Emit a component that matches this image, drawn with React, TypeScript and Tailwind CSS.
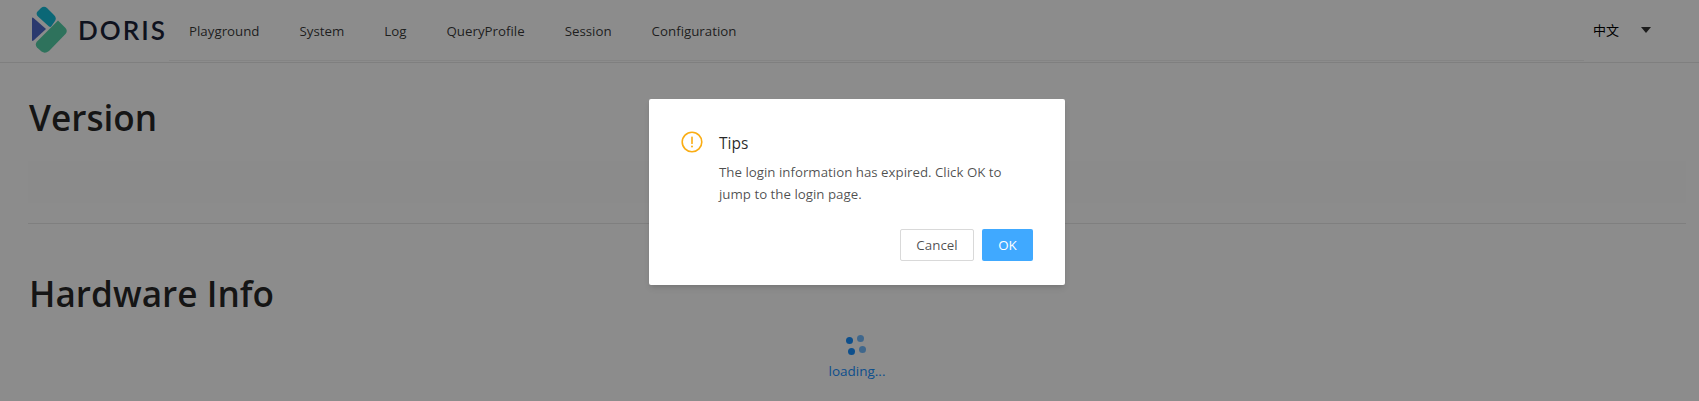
const NAV_ITEMS = ["Playground", "System", "Log", "QueryProfile", "Session", "Configuration"];

function Logo() {
  return (
    <svg width="36" height="48" viewBox="0 0 36 48" className="shrink-0">
      <path d="M0 12.5 Q0 11 1.5 12 L14 23 L1.5 34.5 Q0 35.5 0 34 Z" fill="#4f68c8" />
      <path d="M9 2 Q12 -0.5 15 2 L22 9 Q25 12 23 15 L19.5 20 Q18.5 21.5 17 20.5 L6 10.5 Q3.5 8 5.5 5.5 Z" fill="#14bcd8" />
      <path d="M26 14.5 L33.5 22 Q36 25 33.5 28 L17 45 Q13 48 9.5 45.5 L5 41.5 Q2.5 38.5 5 35.5 Z" fill="#55d0a8" />
    </svg>
  );
}

function Spinner() {
  return (
    <div className="relative h-[24px] w-[24px]">
      <span className="absolute left-[0px] top-[4px] h-[7px] w-[7px] rounded-full bg-[#1890ff]" />
      <span className="absolute left-[11px] top-[2px] h-[7px] w-[7px] rounded-full bg-[#1890ff] opacity-60" />
      <span className="absolute left-[2px] top-[15px] h-[7px] w-[7px] rounded-full bg-[#1890ff]" />
      <span className="absolute left-[13px] top-[13px] h-[7px] w-[7px] rounded-full bg-[#1890ff] opacity-60" />
    </div>
  );
}

function WarningIcon() {
  return (
    <svg width="22" height="22" viewBox="0 0 22 22" className="shrink-0">
      <circle cx="11" cy="11" r="9.8" fill="none" stroke="#faad14" strokeWidth="1.6" />
      <rect x="10.2" y="5.5" width="1.6" height="7.5" rx="0.6" fill="#faad14" />
      <circle cx="11" cy="15.6" r="1" fill="#faad14" />
    </svg>
  );
}

function ExpiredDialog() {
  return (
    <div className="absolute inset-0 bg-black/45 pl-[15px]">
      <div className="mx-auto mt-[99px] w-[416px] rounded-[2px] bg-white px-[32px] pb-[24px] pt-[32px] shadow-md">
        <div className="flex gap-[16px]">
          <WarningIcon />
          <div>
            <div className="text-[15.5px] font-medium leading-[24px] text-black/85">Tips</div>
            <p className="mt-[6px] text-[13.3px] leading-[22px] text-black/70">
              The login information has expired. Click OK to jump to the login page.
            </p>
          </div>
        </div>
        <div className="mt-[24px] flex justify-end gap-[8px]">
          <button className="h-[32px] w-[74px] rounded-[2px] border border-[#d9d9d9] bg-white text-[13.4px] text-black/70">
            Cancel
          </button>
          <button className="h-[32px] w-[51px] rounded-[2px] bg-[#40a9ff] text-[13.4px] text-white">OK</button>
        </div>
      </div>
    </div>
  );
}

export default function App() {
  return (
    <div className="relative h-[401px] w-full overflow-hidden bg-white font-['Open_Sans','Noto_Sans',sans-serif] text-black/85">
      <header className="flex h-[63px] items-start border-b border-[#e8e8e8] pl-[32px]">
        <div className="flex h-[60px] w-[137px] shrink-0 items-center gap-[10px]">
          <Logo />
          <span className="font-['Lato',sans-serif] text-[26px] font-semibold leading-none tracking-[2px] text-[#1a2238]">
            DORIS
          </span>
        </div>
        <nav className="flex h-[61px] flex-1 gap-[40px] border-b border-[#f0f0f0] pl-[20px] pt-[2px] text-[13.3px] leading-[58px] text-black/80">
          {NAV_ITEMS.map((item) => (
            <span key={item}>{item}</span>
          ))}
        </nav>
        <div className="flex h-[60px] items-center pl-[9px]">
          <span className="font-['Noto_Sans_CJK_SC',sans-serif] text-[13px] text-black">中文</span>
          <span className="ml-[22px] mr-[48px] h-0 w-0 border-x-[5px] border-t-[6px] border-x-transparent border-t-[#333]" />
        </div>
      </header>

      <main className="pl-[28px] pr-[13px]">
        <h1 className="ml-[1px] mt-[29px] text-[35.2px] font-semibold leading-[50px]">Version</h1>
        <div className="mt-[19px] h-[42px] bg-[#fdfdfd]" />
        <div className="mt-[20px] border-t border-[#e8e8e8]" />
        <h1 className="ml-[1px] mt-[44px] text-[35.2px] font-semibold leading-[50px]">Hardware Info</h1>
        <div className="mt-[15px] flex flex-col items-center">
          <div className="pl-[2px]">
            <Spinner />
          </div>
          <span className="mt-[4px] text-[13.5px] leading-[20px] text-[#1890ff]">loading...</span>
        </div>
      </main>

      <ExpiredDialog />
    </div>
  );
}
